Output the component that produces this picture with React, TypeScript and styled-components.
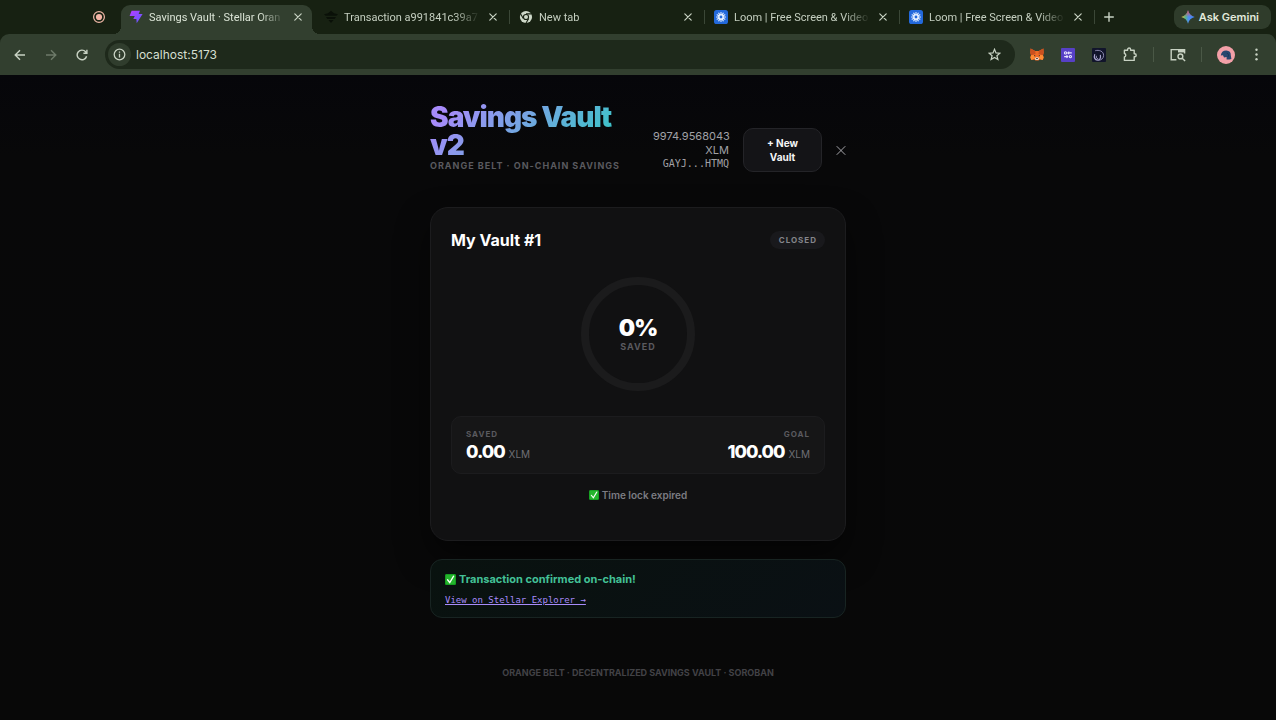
import React from "react";
import styled, { createGlobalStyle } from "styled-components";

const GlobalStyle = createGlobalStyle`
  *, *::before, *::after { box-sizing: border-box; }
  html, body, #root { min-height: 100vh; }
  body {
    margin: 0;
    background: #080809;
    color: #fff;
    font-family: Inter, "Liberation Sans", sans-serif;
    -webkit-font-smoothing: antialiased;
  }
  h1, h2, p, dl, dd, ul { margin: 0; padding: 0; }
  button, input { font: inherit; color: inherit; }
`;

const Screen = styled.div`
  display: flex;
  flex-direction: column;
  min-height: 100vh;
`;

/* ---------- browser chrome ---------- */

const IconButton = styled.button<{ $size?: number }>`
  display: inline-flex;
  align-items: center;
  justify-content: center;
  flex: none;
  width: ${(p) => p.$size ?? 31}px;
  height: ${(p) => p.$size ?? 31}px;
  padding: 0;
  border: 0;
  background: none;
  color: #c8d2c3;

  &:disabled {
    color: #6d7a69;
  }
`;

const TabStrip = styled.div`
  display: flex;
  align-items: center;
  height: 34px;
  padding: 0 5px 0 92px;
  background: #172112;
  color: #c5cfc0;
`;

const TabList = styled.ul`
  display: flex;
  flex: 0 1 975px;
  min-width: 0;
  height: 34px;
  margin-left: 15px;
  padding-top: 5px;
  list-style: none;
`;

const TabItem = styled.li<{ $active?: boolean }>`
  position: relative;
  display: flex;
  align-items: center;
  flex: 1 1 0;
  min-width: 0;
  height: 29px;
  margin-right: 4px;
  padding: 0 7px 5px 8px;
  gap: 6px;
  border-radius: 9px 9px 0 0;
  background: ${(p) => (p.$active ? "#323f2f" : "transparent")};
  color: ${(p) => (p.$active ? "#dbe4d6" : "inherit")};

  &::before,
  &::after {
    content: "";
    position: absolute;
    bottom: 0;
    width: 8px;
    height: 8px;
    display: ${(p) => (p.$active ? "block" : "none")};
  }
  &::before {
    left: -8px;
    background: radial-gradient(circle at 0 0, transparent 8px, #323f2f 8px);
  }
  &::after {
    right: -8px;
    background: radial-gradient(circle at 100% 0, transparent 8px, #323f2f 8px);
  }
`;

const TabTitle = styled.span`
  flex: 1;
  min-width: 0;
  padding-top: 1px;
  overflow: hidden;
  white-space: nowrap;
  font-family: Roboto, sans-serif;
  font-size: 11px;
  line-height: 16px;
  mask-image: linear-gradient(to right, #000 calc(100% - 26px), transparent);
`;

const TabDivider = styled.span`
  position: absolute;
  right: -3px;
  top: 5px;
  width: 1px;
  height: 14px;
  background: #3b4737;
`;

const GeminiButton = styled.button`
  display: flex;
  align-items: center;
  gap: 4px;
  height: 24px;
  margin-left: auto;
  padding: 0 12px 0 7px;
  border: 0;
  border-radius: 9px;
  background: #2f3c2b;
  color: #e2eadc;
  font-size: 11px;
  font-weight: 600;
  white-space: nowrap;
`;

const ToolbarBack = styled.div`
  background: #172112;
`;

const Toolbar = styled.div`
  display: flex;
  align-items: center;
  height: 41px;
  padding: 0 4px;
  border-radius: 9px 9px 0 0;
  background: #323f2f;
`;

const Omnibox = styled.div`
  display: flex;
  align-items: center;
  flex: 1;
  min-width: 0;
  height: 29px;
  margin: 0 6px 0 8px;
  padding: 0 5px 0 3px;
  border-radius: 15px;
  background: #1e291b;
`;

const SiteInfo = styled(IconButton)`
  border-radius: 50%;
  background: #303d2d;
`;

const Address = styled.input`
  flex: 1;
  min-width: 0;
  margin-left: 5px;
  padding: 0;
  border: 0;
  outline: 0;
  background: none;
  color: #d5dfd0;
  font-size: 12px;
  line-height: 16px;
`;

const ToolDivider = styled.span`
  flex: none;
  width: 1px;
  height: 15px;
  margin: 0 8px;
  background: #4a5846;
`;

/* ---------- page ---------- */

const Page = styled.main`
  flex: 1;
  padding: 28px 16px 40px;
  background: linear-gradient(#06060a 0, #080809 80px, #080808 100%);
`;

const Column = styled.div`
  max-width: 416px;
  margin: 0 auto;
`;

const Header = styled.header`
  display: flex;
  align-items: flex-end;
  justify-content: space-between;
  margin-bottom: 35px;
`;

const Brand = styled.div`
  flex: 0 0 190px;
`;

const Title = styled.h1`
  width: fit-content;
  margin-bottom: 1px;
  background: linear-gradient(135deg, #a78bfa 10%, #3cc3c8 85%);
  background-clip: text;
  -webkit-background-clip: text;
  color: transparent;
  font-size: 28px;
  font-weight: 900;
  line-height: 28px;
  letter-spacing: -1px;
`;

const Caption = styled.p<{ $color?: string; $size?: number; $spacing?: number }>`
  color: ${(p) => p.$color ?? "#5a5a5f"};
  font-size: ${(p) => p.$size ?? 8}px;
  font-weight: 700;
  line-height: 12px;
  letter-spacing: ${(p) => p.$spacing ?? 1}px;
  text-transform: uppercase;
  white-space: nowrap;
`;

const Account = styled.div`
  display: flex;
  align-items: center;
  gap: 14px;
`;

const Wallet = styled.div`
  width: 76px;
  color: #a1a1a6;
  font-size: 11px;
  line-height: 14px;
  text-align: right;
`;

const WalletKey = styled.div`
  font-family: "DejaVu Sans Mono", monospace;
  font-size: 10px;
`;

const NewVault = styled.button`
  width: 79px;
  height: 44px;
  padding: 0 16px;
  border: 1px solid #242428;
  border-radius: 10px;
  background: #141417;
  color: #f4f4f5;
  font-size: 10px;
  font-weight: 700;
  line-height: 14px;
`;

const DisconnectButton = styled(IconButton)`
  width: 10px;
  color: #a6a6ac;
`;

const Card = styled.section`
  display: flex;
  flex-direction: column;
  min-height: 334px;
  padding: 20px;
  border: 1px solid #1c1c1e;
  border-radius: 18px;
  background: #111112;
  box-shadow: 0 16px 32px rgba(0, 0, 0, 0.5);
`;

const CardHead = styled.div`
  display: flex;
  align-items: center;
  justify-content: space-between;
  height: 24px;
`;

const CardTitle = styled.h2`
  font-size: 16px;
  font-weight: 700;
  line-height: 24px;
`;

const Badge = styled.span`
  padding: 0 8px 0 9px;
  border-radius: 9px;
  background: #19191c;
  color: #85858b;
  font-size: 8px;
  font-weight: 700;
  line-height: 18px;
  letter-spacing: 1px;
`;

const Gauge = styled.div`
  display: flex;
  flex-direction: column;
  align-items: center;
  justify-content: center;
  width: 114px;
  height: 114px;
  margin: 25px auto;
  border: 8px solid #1b1b1c;
  border-radius: 50%;
`;

const Percent = styled.strong`
  font-size: 23px;
  font-weight: 900;
  line-height: 25px;
  letter-spacing: -1px;
`;

const Stats = styled.dl`
  display: flex;
  justify-content: space-between;
  padding: 11px 14px 9px;
  border: 1px solid #1c1c1e;
  border-radius: 10px;
  background: #161617;
`;

const Stat = styled.div<{ $end?: boolean }>`
  text-align: ${(p) => (p.$end ? "right" : "left")};
`;

const Amount = styled.dd`
  font-size: 18px;
  font-weight: 800;
  line-height: 24px;
  letter-spacing: -1px;
`;

const Unit = styled.span`
  margin-left: 4px;
  color: #6f6f75;
  font-size: 10px;
  font-weight: 400;
  line-height: 10px;
  letter-spacing: 0;
`;

const LockNote = styled.p`
  display: flex;
  align-items: center;
  justify-content: center;
  gap: 3px;
  margin-top: 13px;
  color: #7c7c82;
  font-size: 10px;
  font-weight: 600;
  line-height: 16px;
`;

const Notice = styled.section`
  margin-top: 18px;
  padding: 10px 14px;
  border: 1px solid #182422;
  border-radius: 12px;
  background: linear-gradient(135deg, #09120f, #0a1014);
`;

const NoticeTitle = styled.p`
  display: flex;
  align-items: center;
  gap: 3px;
  color: #43c197;
  font-size: 11px;
  font-weight: 700;
  line-height: 18px;
`;

const ExplorerLink = styled.a`
  display: block;
  width: fit-content;
  margin-top: 5px;
  color: #a78bfa;
  font-family: "DejaVu Sans Mono", monospace;
  font-size: 9px;
  line-height: 14px;
`;

const Footer = styled.footer`
  display: flex;
  justify-content: center;
  margin-top: 49px;
`;

/* ---------- drawings ---------- */

const CloseIcon = ({ size = 8, width = 1.5 }: { size?: number; width?: number }) => (
  <svg width={size} height={size} viewBox="0 0 10 10" fill="none" stroke="currentColor" strokeWidth={width} strokeLinecap="round">
    <path d="M1 1l8 8M9 1l-8 8" />
  </svg>
);

const Check = ({ size }: { size: number }) => (
  <svg width={size} height={size} viewBox="0 0 12 12" aria-hidden="true">
    <rect width="12" height="12" rx="2" fill="#25b52d" />
    <rect x=".5" y=".5" width="11" height="11" rx="1.6" fill="none" stroke="#149b21" />
    <path d="M2.8 6.3l2.4 3L9.4 2.4" fill="none" stroke="#fff" strokeWidth="1.4" strokeLinecap="round" />
  </svg>
);

const RecordIcon = () => (
  <svg width="14" height="14" viewBox="0 0 14 14">
    <circle cx="7" cy="7" r="5.4" fill="none" stroke="#f0b8a8" strokeWidth="1.2" />
    <circle cx="7" cy="7" r="3.1" fill="#f5b5a6" />
  </svg>
);

const BoltIcon = () => (
  <svg width="14" height="14" viewBox="0 0 14 14">
    <defs>
      <linearGradient id="bolt" x1="0" y1="0" x2="1" y2="1">
        <stop offset="0" stopColor="#b63cff" />
        <stop offset="1" stopColor="#5b5cff" />
      </linearGradient>
    </defs>
    <path d="M2.6.8H11L9.6 4.1h4L7.7 13.2l-.3-4.3H4.3L5.8 6H.6z" fill="url(#bolt)" />
  </svg>
);

const StellarIcon = () => (
  <svg width="14" height="14" viewBox="0 0 14 14" fill="#0a1008">
    <path d="M0 4.2l4-1L7 .8l3 2.4 4 1-1.6 1.6H1.6zM2 7h10l-1.4 2H3.4zM4.4 10h5.2L7 13z" />
  </svg>
);

const ChromeIcon = () => (
  <svg width="14" height="14" viewBox="0 0 14 14">
    <circle cx="7" cy="7" r="6.1" fill="#ced8c9" />
    <circle cx="7" cy="7" r="3.1" fill="#172112" />
    <path d="M7 3.9h5.6M4.3 8.5L1.5 3.7M9.7 8.5L6.9 13.3" stroke="#172112" strokeWidth="1.1" />
    <circle cx="7" cy="7" r="2" fill="#ced8c9" />
  </svg>
);

const LoomIcon = () => (
  <svg width="14" height="14" viewBox="0 0 14 14">
    <rect width="14" height="14" rx="2.6" fill="#2369dc" />
    <g stroke="#e6f0ff" strokeWidth="1.1" strokeLinecap="round">
      {[0, 30, 60, 90, 120, 150].map((a) => (
        <path key={a} d="M7 2.5v9" transform={`rotate(${a} 7 7)`} />
      ))}
    </g>
    <circle cx="7" cy="7" r="2.9" fill="#e6f0ff" />
    <circle cx="7" cy="7" r="1.4" fill="#2369dc" />
  </svg>
);

const GeminiIcon = () => (
  <svg width="14" height="14" viewBox="0 0 14 14">
    <defs>
      <linearGradient id="gemA" x1="0" y1=".5" x2="1" y2=".5">
        <stop offset="0" stopColor="#f2c53b" />
        <stop offset=".3" stopColor="#57b784" />
        <stop offset=".55" stopColor="#4d8df5" />
        <stop offset="1" stopColor="#3c82f6" />
      </linearGradient>
      <linearGradient id="gemB" x1=".5" y1="0" x2=".5" y2=".5">
        <stop offset="0" stopColor="#ef5350" />
        <stop offset="1" stopColor="#ef5350" stopOpacity="0" />
      </linearGradient>
    </defs>
    <path d="M7 .3C7.9 3.8 10.2 6.1 13.7 7 10.2 7.9 7.9 10.2 7 13.7 6.1 10.2 3.8 7.9.3 7 3.8 6.1 6.1 3.8 7 .3z" fill="url(#gemA)" />
    <path d="M7 .3C7.9 3.8 10.2 6.1 13.7 7 10.2 7.9 7.9 10.2 7 13.7 6.1 10.2 3.8 7.9.3 7 3.8 6.1 6.1 3.8 7 .3z" fill="url(#gemB)" />
  </svg>
);

const line = { fill: "none", stroke: "currentColor", strokeWidth: 1.4 } as const;

const ArrowIcon = ({ flip }: { flip?: boolean }) => (
  <svg width="12" height="12" viewBox="0 0 12 12" {...line}>
    <path d={flip ? "M1 6h9.6M6 1.2L10.8 6 6 10.8" : "M11 6H1.4M6 1.2L1.2 6 6 10.8"} />
  </svg>
);

const ReloadIcon = () => (
  <svg width="12" height="12" viewBox="0 0 12 12" {...line}>
    <path d="M10.6 7.2A4.8 4.8 0 1 1 9.6 2.8L10.8 4M10.9.8v3.5H7.4" />
  </svg>
);

const InfoIcon = () => (
  <svg width="13" height="13" viewBox="0 0 13 13" {...line} strokeWidth={1.3}>
    <circle cx="6.5" cy="6.5" r="5.3" />
    <path d="M6.5 5.8v3.6M6.5 3.4v1.4" />
  </svg>
);

const StarIcon = () => (
  <svg width="13" height="13" viewBox="0 0 13 13" {...line} strokeWidth={1.2}>
    <path d="M6.5 1.3l1.5 3.6 3.9.3-3 2.5 1 3.8-3.4-2.1-3.4 2.1 1-3.8-3-2.5 3.9-.3z" />
  </svg>
);

const FoxIcon = () => (
  <svg width="14" height="13" viewBox="0 0 14 13">
    <path d="M.6.6l4.6 2.3h3.6L13.4.6l.3 4.2-.7 2.5.6 2.4-1 2.4-2.8-.6-1.4 1.1H5.6l-1.4-1.1-2.8.6-1-2.4L1 7.3.3 4.8z" fill="#ed6b26" />
    <path d="M.6.6l4.6 2.3.3 3.2L1 7.3.3 4.8zM13.4.6L8.8 2.9l-.3 3.2L13 7.3l.7-2.5z" fill="#c9501f" />
    <path d="M1 7.3l3.4-.4.7 3.5-3.7 1.5-1-2.3zM13 7.3l-3.4-.4-.7 3.5 3.7 1.5 1-2.3z" fill="#ff8b32" />
    <path d="M4.1 7.1l1.5.9-1.5.3zM9.9 7.1l-1.5.9 1.5.3z" fill="#20232f" />
    <path d="M4.8 9.9l1.5-.6h1.4l1.5.6-.6 2.1H5.4z" fill="#f2d6c3" />
    <path d="M6.1 9.9h1.8l.2.9H5.9z" fill="#26222c" />
  </svg>
);

const SlidersIcon = () => (
  <svg width="14" height="14" viewBox="0 0 14 14">
    <rect width="14" height="14" rx="1" fill="#5740c6" />
    <g fill="none" stroke="#e9e5ff" strokeWidth="1.1">
      <circle cx="4.5" cy="4.9" r="1.1" />
      <path d="M6.6 4.9h4.2M3.2 8.6h3.8" />
      <circle cx="9.4" cy="8.6" r="1.1" />
      <path d="M8.2 3.6L6.9 4.9l1.3 1.3M5.5 7.3l1.3 1.3-1.3 1.3" />
    </g>
  </svg>
);

const SwirlIcon = () => (
  <svg width="14" height="14" viewBox="0 0 14 14">
    <rect width="14" height="14" rx="1" fill="#11142b" />
    <g fill="none" stroke="#aaa6cf" strokeLinecap="round">
      <path d="M3.6 2.6c3.4-1 8 .6 8 4.8 0 3-2.4 4.9-5 4.9" strokeWidth=".8" />
      <path d="M2.7 6.6C1.6 9.4 3 12 5.4 12.2c2.4 0 3.6-2.4 3-4.8" strokeWidth="1.2" />
      <path d="M4.3 8.2c-.4 1.4.3 2.5 1.4 2.4" strokeWidth=".9" />
    </g>
  </svg>
);

const PuzzleIcon = () => (
  <svg width="15" height="15" viewBox="0 0 15 15" {...line} strokeLinejoin="round">
    <path d="M2.4 3.2h3.2v-.7a1.5 1.5 0 0 1 3 0v.7h3.6v3.5h.5a1.5 1.5 0 0 1 0 3h-.5v3.7H2.4v-3.4a1.8 1.8 0 0 0 0-3.5z" />
  </svg>
);

const SidePanelIcon = () => (
  <svg width="16" height="14" viewBox="0 0 16 14" {...line}>
    <path d="M6.4 11.8H1.2V1.6h13.4v4" />
    <path d="M8 1.4h6.6v3H8z" fill="currentColor" stroke="none" />
    <circle cx="10.4" cy="8.4" r="2.4" />
    <path d="M12.2 10.2l2.9 2.9" />
  </svg>
);

const AvatarIcon = () => (
  <svg width="18" height="18" viewBox="0 0 18 18">
    <circle cx="9" cy="9" r="9" fill="#f3a0a8" />
    <path d="M3.8 9.6C4 6.4 6.4 4.4 9.4 4.6c3 .1 4.6 2 4.4 4.6l.6 3.8-2 .6H9.6V11L7 11.4 6 9.2z" fill="#27476e" />
    <path d="M9.7 7.2c1.8 0 2.2 2.2 1.4 3.6" fill="none" stroke="#16304f" strokeWidth=".8" />
  </svg>
);

const MenuIcon = () => (
  <svg width="5" height="13" viewBox="0 0 5 13" fill="currentColor">
    <circle cx="2.5" cy="1.8" r="1.2" />
    <circle cx="2.5" cy="6.5" r="1.2" />
    <circle cx="2.5" cy="11.2" r="1.2" />
  </svg>
);

const tabs = [
  { title: "Savings Vault · Stellar Oran", icon: <BoltIcon />, active: true },
  { title: "Transaction a991841c39a7", icon: <StellarIcon />, divider: true },
  { title: "New tab", icon: <ChromeIcon />, divider: true },
  { title: "Loom | Free Screen & Video", icon: <LoomIcon />, divider: true },
  { title: "Loom | Free Screen & Video", icon: <LoomIcon />, divider: true },
];

const extensions = [
  { label: "MetaMask", icon: <FoxIcon /> },
  { label: "Settings extension", icon: <SlidersIcon /> },
  { label: "Wallet extension", icon: <SwirlIcon /> },
  { label: "Extensions", icon: <PuzzleIcon /> },
];

const BrowserChrome = () => (
  <>
    <TabStrip>
      <IconButton $size={14} aria-label="Recording">
        <RecordIcon />
      </IconButton>
      <TabList>
        {tabs.map((tab, i) => (
          <TabItem key={i} $active={tab.active}>
            {tab.icon}
            <TabTitle>{tab.title}</TabTitle>
            <IconButton $size={14} aria-label={`Close tab ${i + 1}`}>
              <CloseIcon />
            </IconButton>
            {tab.divider && <TabDivider />}
          </TabItem>
        ))}
      </TabList>
      <IconButton $size={26} aria-label="Open new tab">
        <svg width="10" height="10" viewBox="0 0 10 10" {...line}>
          <path d="M5 .2v9.6M.2 5h9.6" />
        </svg>
      </IconButton>
      <GeminiButton>
        <GeminiIcon />
        Ask Gemini
      </GeminiButton>
    </TabStrip>
    <ToolbarBack>
      <Toolbar>
        <IconButton aria-label="Back"><ArrowIcon /></IconButton>
        <IconButton aria-label="Forward" disabled><ArrowIcon flip /></IconButton>
        <IconButton aria-label="Reload"><ReloadIcon /></IconButton>
        <Omnibox>
          <SiteInfo $size={23} aria-label="Site information"><InfoIcon /></SiteInfo>
          <Address type="text" aria-label="Address" defaultValue="localhost:5173" />
          <IconButton aria-label="Bookmark"><StarIcon /></IconButton>
        </Omnibox>
        {extensions.map((e) => (
          <IconButton key={e.label} aria-label={e.label}>{e.icon}</IconButton>
        ))}
        <ToolDivider />
        <IconButton aria-label="Side panel search"><SidePanelIcon /></IconButton>
        <ToolDivider />
        <IconButton aria-label="Profile"><AvatarIcon /></IconButton>
        <IconButton aria-label="Menu"><MenuIcon /></IconButton>
      </Toolbar>
    </ToolbarBack>
  </>
);

const App = () => (
  <Screen>
    <GlobalStyle />
    <BrowserChrome />
    <Page>
      <Column>
        <Header>
          <Brand>
            <Title>Savings Vault v2</Title>
            <Caption $size={9}>Orange Belt · On-Chain Savings</Caption>
          </Brand>
          <Account>
            <Wallet>
              9974.9568043 XLM
              <WalletKey>GAYJ...HTMQ</WalletKey>
            </Wallet>
            <NewVault>+ New Vault</NewVault>
            <DisconnectButton aria-label="Disconnect">
              <CloseIcon size={11} width={1} />
            </DisconnectButton>
          </Account>
        </Header>

        <Card>
          <CardHead>
            <CardTitle>My Vault #1</CardTitle>
            <Badge>CLOSED</Badge>
          </CardHead>
          <Gauge>
            <Percent>0%</Percent>
            <Caption $size={9}>Saved</Caption>
          </Gauge>
          <Stats>
            <Stat>
              <Caption as="dt">Saved</Caption>
              <Amount>0.00<Unit>XLM</Unit></Amount>
            </Stat>
            <Stat $end>
              <Caption as="dt">Goal</Caption>
              <Amount>100.00<Unit>XLM</Unit></Amount>
            </Stat>
          </Stats>
          <LockNote>
            <Check size={10} />
            Time lock expired
          </LockNote>
        </Card>

        <Notice>
          <NoticeTitle>
            <Check size={11} />
            Transaction confirmed on-chain!
          </NoticeTitle>
          <ExplorerLink href="#explorer">View on Stellar Explorer →</ExplorerLink>
        </Notice>

        <Footer>
          <Caption $color="#424246" $size={9} $spacing={0}>
            Orange Belt · Decentralized Savings Vault · Soroban
          </Caption>
        </Footer>
      </Column>
    </Page>
  </Screen>
);

export default App;
